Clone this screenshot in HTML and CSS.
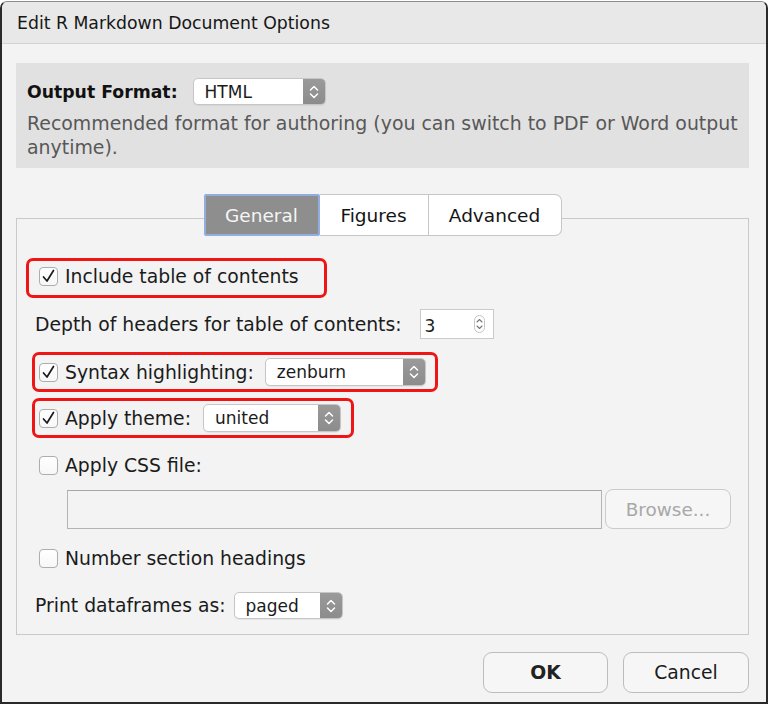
FILE: index.html
```html
<!DOCTYPE html>
<html>
<head>
<meta charset="utf-8">
<title>Edit R Markdown Document Options</title>
<link rel="stylesheet" href="styles.css">
</head>
<body>
<div class="window">
  <div class="titlebar">Edit R Markdown Document Options</div>
  <div class="content">
    <div class="format-box">
      <div class="format-row">
        <span class="format-label">Output Format:</span>
        <div class="select select-html">
          <span class="select-value">HTML</span>
          <span class="stepper"><svg width="10" height="14" viewBox="0 0 10 14"><path d="M1.5 5 L5 1.5 L8.5 5 M1.5 9 L5 12.5 L8.5 9" fill="none" stroke="#fff" stroke-width="1.5" stroke-linecap="round" stroke-linejoin="round"/></svg></span>
        </div>
      </div>
      <p class="format-desc">Recommended format for authoring (you can switch to PDF or Word output anytime).</p>
    </div>

    <div class="panel">
      <div class="tabs">
        <div class="tab tab-general tab-active">General</div>
        <div class="tab tab-figures">Figures</div>
        <div class="tab tab-advanced">Advanced</div>
      </div>

      <div class="hl hl-toc">
        <span class="check"><svg width="17" height="17" viewBox="0 0 17 17"><path d="M3.5 9 L7 13 L13.5 2.5" fill="none" stroke="#1a1a1a" stroke-width="1.7" stroke-linecap="round" stroke-linejoin="round"/></svg></span>
        <span class="label">Include table of contents</span>
      </div>

      <div class="row row-depth">
        <span class="label">Depth of headers for table of contents:</span>
        <div class="spin">
          <span class="spin-value">3</span>
          <span class="spin-btn"><svg width="11" height="18" viewBox="0 0 11 18"><rect x="0.5" y="0.5" width="10" height="17" rx="5" fill="#fff" stroke="#c4c4c4"/><path d="M3 7 L5.5 4.5 L8 7 M3 11 L5.5 13.5 L8 11" fill="none" stroke="#777" stroke-width="1.1" stroke-linecap="round" stroke-linejoin="round"/></svg></span>
        </div>
      </div>

      <div class="hl hl-syntax">
        <span class="check"><svg width="17" height="17" viewBox="0 0 17 17"><path d="M3.5 9 L7 13 L13.5 2.5" fill="none" stroke="#1a1a1a" stroke-width="1.7" stroke-linecap="round" stroke-linejoin="round"/></svg></span>
        <span class="label">Syntax highlighting:</span>
        <div class="select select-syntax">
          <span class="select-value">zenburn</span>
          <span class="stepper"><svg width="10" height="14" viewBox="0 0 10 14"><path d="M1.5 5 L5 1.5 L8.5 5 M1.5 9 L5 12.5 L8.5 9" fill="none" stroke="#fff" stroke-width="1.5" stroke-linecap="round" stroke-linejoin="round"/></svg></span>
        </div>
      </div>

      <div class="hl hl-theme">
        <span class="check"><svg width="17" height="17" viewBox="0 0 17 17"><path d="M3.5 9 L7 13 L13.5 2.5" fill="none" stroke="#1a1a1a" stroke-width="1.7" stroke-linecap="round" stroke-linejoin="round"/></svg></span>
        <span class="label">Apply theme:</span>
        <div class="select select-theme">
          <span class="select-value">united</span>
          <span class="stepper"><svg width="10" height="14" viewBox="0 0 10 14"><path d="M1.5 5 L5 1.5 L8.5 5 M1.5 9 L5 12.5 L8.5 9" fill="none" stroke="#fff" stroke-width="1.5" stroke-linecap="round" stroke-linejoin="round"/></svg></span>
        </div>
      </div>

      <div class="row row-css">
        <span class="check"></span>
        <span class="label">Apply CSS file:</span>
      </div>

      <div class="row row-file">
        <div class="file-input"></div>
        <div class="browse">Browse...</div>
      </div>

      <div class="row row-number">
        <span class="check"></span>
        <span class="label">Number section headings</span>
      </div>

      <div class="row row-print">
        <span class="label">Print dataframes as:</span>
        <div class="select select-print">
          <span class="select-value">paged</span>
          <span class="stepper"><svg width="10" height="14" viewBox="0 0 10 14"><path d="M1.5 5 L5 1.5 L8.5 5 M1.5 9 L5 12.5 L8.5 9" fill="none" stroke="#fff" stroke-width="1.5" stroke-linecap="round" stroke-linejoin="round"/></svg></span>
        </div>
      </div>
    </div>

    <div class="actions">
      <div class="btn btn-ok">OK</div>
      <div class="btn btn-cancel">Cancel</div>
    </div>
  </div>
</div>
</body>
</html>
```

FILE: styles.css
```css
html, body {
  margin: 0;
  padding: 0;
}

body {
  background: #ffffff;
  font-family: "DejaVu Sans", "Liberation Sans", sans-serif;
  color: #1b1b1b;
}

.window {
  width: 768px;
  height: 703px;
  margin-top: 1px;
  box-sizing: border-box;
  border: 2px solid #2a2a2a;
  border-top: 1px solid #8c8c8c;
  border-radius: 7px 7px 0 0;
  background: #f2f3f2;
  overflow: hidden;
  display: flex;
  flex-direction: column;
}

.titlebar {
  height: 42px;
  box-sizing: border-box;
  border-bottom: 1px solid #d3d3d3;
  background: #e8e8e8;
  padding-left: 15px;
  font-size: 17.3px;
  line-height: 43px;
  color: #161616;
}

.content {
  padding: 19px 17px 0 14px;
}

/* Output format box */
.format-box {
  background: #e1e1e1;
  padding: 15px 5px 9px 11px;
}

.format-row {
  display: flex;
  align-items: center;
  height: 27px;
}

.format-label {
  font-weight: bold;
  font-size: 17.3px;
  color: #111;
}

.format-desc {
  margin: 6px 0 0;
  font-size: 18.9px;
  line-height: 24px;
  color: #585858;
}

/* Select (popup) */
.select {
  display: flex;
  box-sizing: border-box;
  border: 1px solid #c6c6c6;
  border-radius: 5px;
  background: #fff;
  box-shadow: 0 1px 1px rgba(0, 0, 0, 0.06);
  overflow: hidden;
}

.select-value {
  flex: 1;
  display: flex;
  align-items: center;
  padding-left: 11px;
  font-size: 17px;
  color: #1b1b1b;
}

.stepper {
  width: 22px;
  flex: none;
  display: flex;
  align-items: center;
  justify-content: center;
  background: linear-gradient(#9a9a9a, #8c8c8c);
}

.select-html {
  margin-left: 15px;
  width: 133px;
  height: 27px;
}

.select-syntax {
  margin-left: 11px;
  width: 161px;
  height: 28px;
}

.select-theme {
  margin-left: 12px;
  width: 138px;
  height: 28px;
}

.select-print {
  margin-left: 8px;
  width: 109px;
  height: 27px;
}

/* Tab panel */
.panel {
  margin-top: 50px;
  border: 1px solid #c9c9c9;
  padding: 0 0 15px;
  display: flex;
  flex-direction: column;
  align-items: flex-start;
}

.tabs {
  align-self: stretch;
  display: flex;
  justify-content: center;
  margin-top: -25px;
  height: 42px;
}

.tab {
  box-sizing: border-box;
  height: 42px;
  display: flex;
  align-items: center;
  justify-content: center;
  background: #fff;
  border: 1px solid #c6c6c6;
  border-left: none;
  font-size: 18.5px;
  color: #141414;
}

.tab-general {
  width: 116px;
}

.tab-figures {
  width: 109px;
}

.tab-advanced {
  width: 133px;
  border-radius: 0 7px 7px 0;
}

.tab-active {
  background: #8e8e8e;
  color: #f5f5f5;
  border: 2px solid #92ade0;
  border-radius: 2px;
}

/* Rows */
.label {
  font-size: 18.8px;
  color: #1b1b1b;
  white-space: nowrap;
}

.check {
  width: 19px;
  height: 19px;
  box-sizing: border-box;
  flex: none;
  border: 1px solid #adadad;
  border-radius: 4px;
  background: linear-gradient(#ffffff, #f7f7f7);
  margin-right: 7px;
  display: flex;
  align-items: center;
  justify-content: center;
}

.hl {
  display: flex;
  align-items: center;
  box-sizing: border-box;
  height: 40px;
  border: 3px solid #f01515;
  border-radius: 7px;
}

.hl-toc {
  margin: 22px 0 0 9px;
  width: 301px;
  padding: 0 0 3px 10px;
}

.hl-syntax {
  margin: 13px 0 0 15px;
  width: 406px;
  padding-left: 4px;
}

.hl-theme {
  margin: 6px 0 0 15px;
  width: 322px;
  padding-left: 4px;
}

.row {
  display: flex;
  align-items: center;
}

.row-depth {
  margin: 11px 0 0 18px;
  height: 30px;
}

.spin {
  margin-left: 18px;
  width: 74px;
  height: 30px;
  box-sizing: border-box;
  border: 1px solid #cacaca;
  background: #fff;
  display: flex;
  align-items: center;
  padding: 0 8px 0 4px;
}

.spin-value {
  flex: 1;
  font-size: 17px;
  padding-top: 3px;
}

.spin-btn {
  display: flex;
}

.row-css {
  margin: 17px 0 0 22px;
  height: 20px;
}

.row-file {
  margin: 14px 0 0 50px;
  height: 40px;
  align-items: flex-end;
}

.file-input {
  width: 535px;
  height: 39px;
  box-sizing: border-box;
  border: 1px solid #b4b4b4;
  border-top-color: #a6a6a6;
  background: #f2f3f2;
}

.browse {
  margin-left: 3px;
  width: 126px;
  height: 40px;
  box-sizing: border-box;
  border: 1px solid #cbcbcb;
  border-radius: 8px;
  background: #f6f6f6;
  display: flex;
  align-items: center;
  justify-content: center;
  font-size: 18.4px;
  color: #a8a8a8;
}

.row-number {
  margin: 19px 0 0 22px;
  height: 20px;
}

.row-print {
  margin: 24px 0 0 18px;
  height: 27px;
}

/* Buttons */
.actions {
  display: flex;
  justify-content: flex-end;
  gap: 15px;
  margin-top: 17px;
}

.btn {
  width: 125px;
  height: 41px;
  box-sizing: border-box;
  border: 1px solid #bdbdbd;
  border-radius: 9px;
  background: #f6f6f6;
  display: flex;
  align-items: center;
  justify-content: center;
  font-size: 18.8px;
  color: #1b1b1b;
}

.btn-ok {
  font-weight: bold;
  color: #222;
}

.btn-cancel {
  width: 126px;
}
```
